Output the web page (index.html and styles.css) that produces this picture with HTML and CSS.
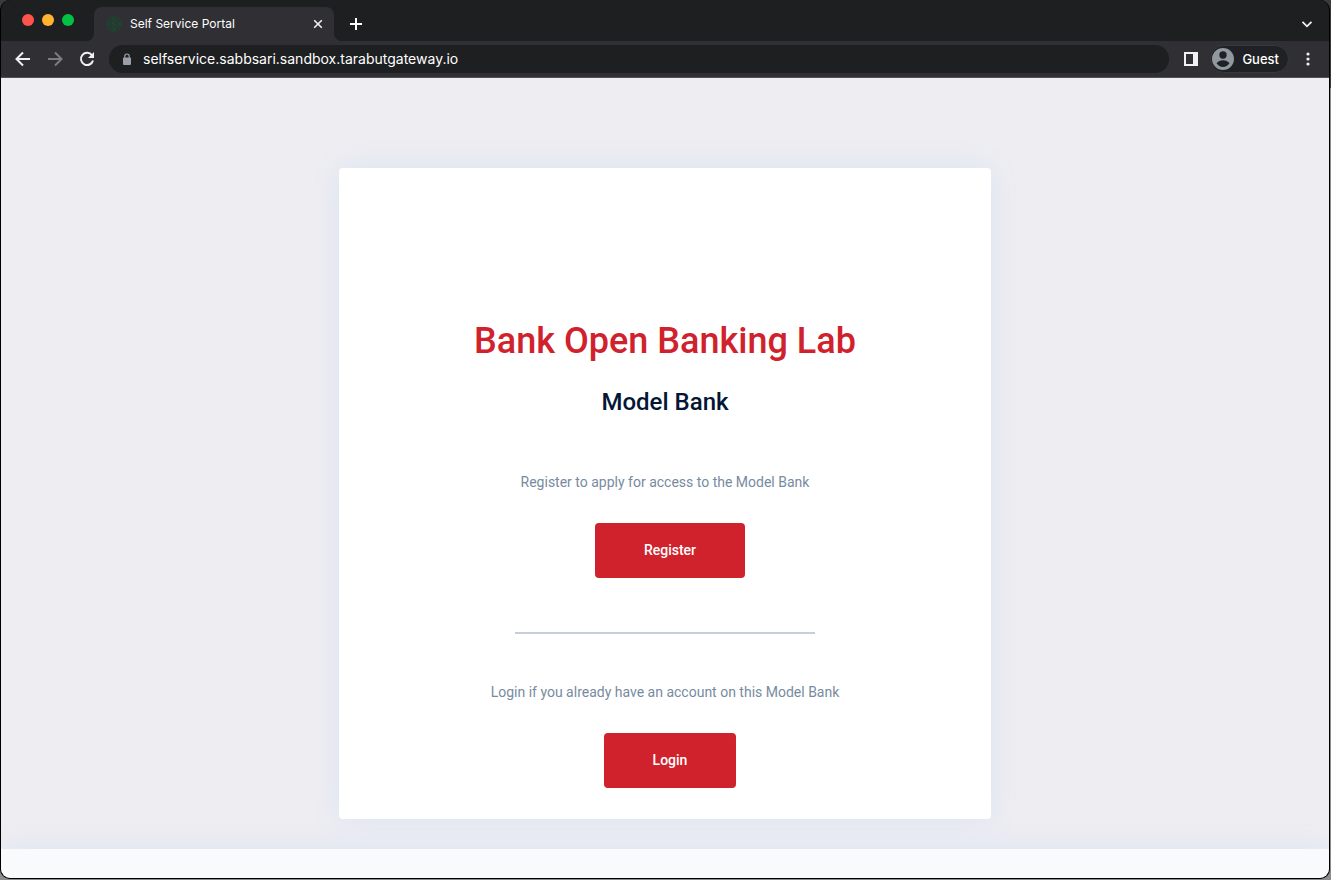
FILE: index.html
```html
<!DOCTYPE html>
<html lang="en">
<head>
<meta charset="utf-8">
<meta name="viewport" content="width=device-width, initial-scale=1">
<title>Self Service Portal</title>
<link rel="stylesheet" href="styles.css">
</head>
<body>
<div class="window">
  <header class="chrome">
    <div class="tab-strip">
      <div class="lights"><span class="light light-close"></span><span class="light light-min"></span><span class="light light-max"></span></div>
      <div class="tab">
        <svg class="favicon" width="16" height="16" viewBox="0 0 16 16" fill="none" stroke="#1d4a35"><circle cx="8" cy="8" r="7.200" fill="#25382f" stroke-dasharray="3 1"/><circle cx="8" cy="8" r="4.800" stroke-dasharray="3 1"/><path d="M10 6H7L6 7l4 2-1 1H6M8 1v3M8 12v3M1 8h3M12 8h3"/></svg>
        <span class="tab-title">Self Service Portal</span>
        <button class="icon-button" type="button" aria-label="Close tab"><svg width="16" height="16" viewBox="0 0 16 16" fill="none" stroke="#f1f1f2" stroke-width="1.6"><path d="M4.2 4.2l7.6 7.6M11.8 4.2l-7.6 7.6"/></svg></button>
      </div>
      <button class="icon-button new-tab" type="button" aria-label="New tab"><svg width="16" height="16" viewBox="0 0 16 16" fill="none" stroke="#fff" stroke-width="2"><path d="M8 2v12M2 8h12"/></svg></button>
      <button class="icon-button tab-search" type="button" aria-label="Search tabs"><svg width="16" height="16" viewBox="0 0 16 16" fill="none" stroke="#f1f1f2" stroke-width="1.8"><path d="M3.5 5.800L8 10.300l4.500-4.500"/></svg></button>
    </div>
    <div class="toolbar">
      <nav class="nav">
        <button class="icon-button" type="button" aria-label="Back"><svg width="16" height="16" viewBox="0 0 16 16" fill="none" stroke="#f1f1f2" stroke-width="2"><path d="M15 8H2M8 1.500L1.500 8 8 14.500"/></svg></button>
        <button class="icon-button" type="button" aria-label="Forward"><svg width="16" height="16" viewBox="0 0 16 16" fill="none" stroke="#7c7c80" stroke-width="2"><path d="M1 8h13M8 1.500L14.500 8 8 14.500"/></svg></button>
        <button class="icon-button" type="button" aria-label="Reload"><svg width="16" height="16" viewBox="0 0 16 16"><path d="M13 4.300A6.100 6.100 0 1 0 14 9.500" fill="none" stroke="#f1f1f2" stroke-width="2"/><path d="M15 1v6H9z" fill="#f1f1f2"/></svg></button>
      </nav>
      <div class="address">
        <svg width="10" height="13" viewBox="0 0 10 13"><rect x="1" y="4.500" width="8" height="7.500" rx="1" fill="#9aa0a6"/><path d="M2.800 5V3.200a2.200 2.200 0 0 1 4.400 0V5" fill="none" stroke="#9aa0a6" stroke-width="1.200"/></svg>
        <input class="url" type="text" aria-label="Address" value="selfservice.sabbsari.sandbox.tarabutgateway.io">
      </div>
      <div class="tools">
        <button class="icon-button" type="button" aria-label="Side panel"><svg width="16" height="16" viewBox="0 0 16 16"><path fill="#f1f1f2" fill-rule="evenodd" d="M1 1h14v14H1zM3 3v10h7V3z"/></svg></button>
        <button class="profile" type="button"><svg width="22" height="22" viewBox="0 0 22 22"><circle cx="11" cy="11" r="11" fill="#9099a0"/><circle cx="11" cy="7" r="3.700" fill="#202124"/><path d="M4.500 15.300Q7 12.300 11 12.300t6.500 3Q15 19 11 19t-6.500-3.700z" fill="#202124"/></svg>Guest</button>
        <button class="icon-button" type="button" aria-label="Menu"><svg width="16" height="16" viewBox="0 0 16 16" fill="#f1f1f2"><circle cx="8" cy="3" r="1.600"/><circle cx="8" cy="8" r="1.600"/><circle cx="8" cy="13" r="1.600"/></svg></button>
      </div>
    </div>
  </header>
  <main class="page">
    <section class="card">
      <h1 class="title">Bank Open Banking Lab</h1>
      <h2 class="subtitle">Model Bank</h2>
      <div class="action">
        <p class="hint">Register to apply for access to the Model Bank</p>
        <button class="button" type="button">Register</button>
      </div>
      <hr class="divider">
      <div class="action">
        <p class="hint">Login if you already have an account on this Model Bank</p>
        <button class="button" type="button">Login</button>
      </div>
    </section>
  </main>
  <footer class="footer"></footer>
</div>
</body>
</html>
```
FILE: styles.css
```css
* { box-sizing: border-box; }
body {
  margin: 0;
  background: linear-gradient(#3a3b3d 0 88px, #8c8c8c 88px);
  font-family: Roboto, "Liberation Sans", sans-serif;
}
.window {
  display: flex;
  flex-direction: column;
  min-height: calc(100vh - 1px);
  margin: 0 1px 1px 0;
  border: 1px solid #000;
  border-top: 0;
  border-radius: 10px;
  overflow: hidden;
  background: #000;
}
.chrome { color: #fff; border-bottom: 1px solid #515154; }
.tab-strip {
  display: flex;
  align-items: flex-end;
  height: 41px;
  background: #1e1f21;
}
.lights { display: flex; gap: 8px; width: 93px; padding: 0 0 15px 21px; }
.light { width: 12px; height: 12px; border-radius: 50%; }
.light-close { background: #ff544d; }
.light-min { background: #ffb32f; }
.light-max { background: #00c343; }
.tab {
  position: relative;
  display: flex;
  align-items: center;
  gap: 8px;
  width: 240px;
  height: 34px;
  padding: 0 8px 0 12px;
  background: #302f34;
  border-radius: 8px 8px 0 0;
}
.tab::before, .tab::after {
  content: "";
  position: absolute;
  bottom: 0;
  width: 8px;
  height: 8px;
}
.tab::before { right: 100%; background: radial-gradient(circle at 0 0, transparent 8px, #302f34 8px); }
.tab::after { left: 100%; background: radial-gradient(circle at 100% 0, transparent 8px, #302f34 8px); }
.tab-title { flex: 1; font: 12px/16px Inter, sans-serif; }
.icon-button {
  display: flex;
  padding: 0;
  border: 0;
  background: none;
}
.new-tab { margin: 0 0 9px 14px; }
.tab-search { margin: 0 14px 9px auto; }
.toolbar {
  display: flex;
  align-items: center;
  gap: 14px;
  height: 36px;
  padding: 0 13px 0 14px;
  background: #302f34;
}
.nav { display: flex; gap: 16px; }
.address {
  display: flex;
  flex: 1;
  align-items: center;
  gap: 11px;
  height: 28px;
  padding: 0 13px;
  border-radius: 14px;
  background: #1e1f21;
}
.url {
  flex: 1;
  min-width: 0;
  padding: 0;
  border: 0;
  outline: 0;
  background: none;
  color: #fff;
  font: 14px/20px Inter, sans-serif;
}
.tools { display: flex; align-items: center; gap: 11px; }
.profile {
  display: flex;
  align-items: center;
  gap: 8px;
  height: 28px;
  padding: 0 9px 0 1px;
  border: 1px solid #38373c;
  border-radius: 14px;
  background: #202124;
  color: #fff;
  font: 500 13px/20px Inter, sans-serif;
}
.page {
  display: flex;
  justify-content: center;
  padding: 90px 16px 30px;
  background: #eeedf2;
}
.card {
  display: flex;
  flex-direction: column;
  align-items: center;
  width: 100%;
  max-width: 652px;
  padding: 150px 24px 31px;
  border-radius: 4px;
  background: #fff;
  box-shadow: 0 0 30px #dae4f1;
  text-align: center;
}
.title {
  margin: 0 0 22px;
  color: #d0222c;
  font-size: 36px;
  font-weight: 500;
  line-height: 46px;
}
.subtitle {
  margin: 0 0 54px;
  color: #041635;
  font-size: 24px;
  font-weight: 500;
  line-height: 32px;
}
.action { display: flex; flex-direction: column; align-items: center; }
.hint {
  margin: 0 0 31px;
  color: #778ba0;
  font-size: 14px;
  line-height: 20px;
}
.button {
  height: 55px;
  margin-left: 10px;
  padding: 0 49px 2px;
  border: 0;
  border-radius: 4px;
  background: #d0222c;
  color: #fff;
  font: 500 14px/20px Roboto, "Liberation Sans", sans-serif;
}
.divider {
  width: 300px;
  max-width: 100%;
  height: 2px;
  margin: 54px 0 48px;
  border: 0;
  background: #c7cddd;
}
.footer {
  flex: 1;
  min-height: 29px;
  background: #f9fafc;
  box-shadow: 0 0 30px #dae4f1;
}
```
